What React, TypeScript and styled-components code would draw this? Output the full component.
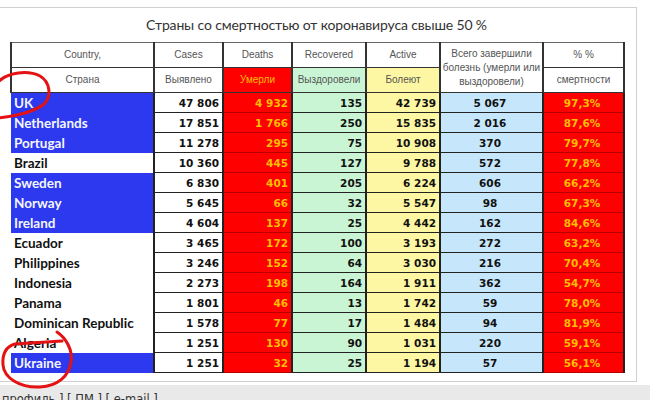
import React from 'react';
import styled, { createGlobalStyle } from 'styled-components';

const GlobalStyle = createGlobalStyle`
	html, body {
		margin: 0;
		padding: 0;
		background: #fff;
		overflow: hidden;
	}
	#root {
		width: 650px;
		height: 400px;
	}
`;

const Page = styled.div`
	position: relative;
	width: 650px;
	height: 400px;
	display: flex;
	flex-direction: column;
	overflow: hidden;
`;

const Frame = styled.div`
	box-sizing: border-box;
	flex: none;
	width: 647px;
	height: 375px;
	margin: 7px 0 0 -10px;
	padding-left: 19px;
	border: 1px solid #cfcfcf;
	background: #fff;
`;

const Title = styled.div`
	width: 613px;
	height: 34px;
	line-height: 34px;
	text-align: center;
	font-family: Lato, 'Liberation Sans', sans-serif;
	font-size: 14px;
	letter-spacing: -0.15px;
	color: #333;
`;

const Table = styled.table`
	border-collapse: collapse;
	table-layout: fixed;
	width: 613px;
`;

const Col = styled.col<{ $w: number }>`
	width: ${p => p.$w}px;
`;

const Head = styled.th<{ $bg?: string; $fg?: string }>`
	height: 24px;
	padding: 0 2px;
	border: 1px solid #333;
	border-left-width: 2px;
	border-right-width: 2px;
	background: ${p => p.$bg || '#fff'};
	color: ${p => p.$fg || '#555'};
	font-family: 'Liberation Sans', Arial, sans-serif;
	font-size: 10px;
	font-weight: normal;
	line-height: 12px;
	text-align: center;
	vertical-align: middle;
`;

const TopHead = styled(Head)`
	border-top-color: #666;
`;

const TallHead = styled(TopHead)`
	padding: 0;
	line-height: 14px;
`;

const Country = styled.td<{ $blue?: boolean }>`
	height: 19px;
	padding: 0 0 0 3px;
	border-right: 2px solid #222;
	background: ${p => (p.$blue ? '#2d39ee' : '#fff')};
	color: ${p => (p.$blue ? '#f4f6ff' : '#111')};
	font-family: Lato, 'Liberation Sans', sans-serif;
	font-size: 13.5px;
	font-weight: 700;
	white-space: nowrap;
`;

const Num = styled.td<{ $bg: string; $fg?: string; $line?: string; $center?: boolean }>`
	height: 19px;
	padding: 0 3px 0 0;
	border-left: 2px solid #222;
	border-right: 2px solid #222;
	border-bottom: 1px solid ${p => p.$line || '#222'};
	background: ${p => p.$bg};
	color: ${p => p.$fg || '#111'};
	font-family: 'DejaVu Sans', Verdana, sans-serif;
	font-size: 10.5px;
	font-weight: 700;
	text-align: ${p => (p.$center ? 'center' : 'right')};
	white-space: nowrap;
`;

const Footer = styled.div`
	flex: 1;
	margin-top: 3px;
	padding: 7px 0 0 2px;
	background: #e9e9e9;
	font-family: 'DejaVu Sans', Verdana, sans-serif;
	font-size: 11.5px;
	line-height: 14px;
	color: #333;
	white-space: nowrap;
`;

const Marks = styled.svg`
	position: absolute;
	left: 0;
	top: 0;
	pointer-events: none;
`;

const RED = '#ff0000';
const GOLD = '#ffbf00';
const GREEN = '#c9f5d4';
const YELLOW = '#fdf7a3';
const SKY = '#c6e7fb';

type Row = [string, boolean, string, string, string, string, string, string];

const rows: Row[] = [
	['UK', true, '47 806', '4 932', '135', '42 739', '5 067', '97,3%'],
	['Netherlands', true, '17 851', '1 766', '250', '15 835', '2 016', '87,6%'],
	['Portugal', true, '11 278', '295', '75', '10 908', '370', '79,7%'],
	['Brazil', false, '10 360', '445', '127', '9 788', '572', '77,8%'],
	['Sweden', true, '6 830', '401', '205', '6 224', '606', '66,2%'],
	['Norway', true, '5 645', '66', '32', '5 547', '98', '67,3%'],
	['Ireland', true, '4 604', '137', '25', '4 442', '162', '84,6%'],
	['Ecuador', false, '3 465', '172', '100', '3 193', '272', '63,2%'],
	['Philippines', false, '3 246', '152', '64', '3 030', '216', '70,4%'],
	['Indonesia', false, '2 273', '198', '164', '1 911', '362', '54,7%'],
	['Panama', false, '1 801', '46', '13', '1 742', '59', '78,0%'],
	['Dominican Republic', false, '1 578', '77', '17', '1 484', '94', '81,9%'],
	['Algeria', false, '1 251', '130', '90', '1 031', '220', '59,1%'],
	['Ukraine', true, '1 251', '32', '25', '1 194', '57', '56,1%'],
];

export default function App() {
	return (
		<Page>
			<GlobalStyle />
			<Frame>
				<Title>Страны со смертностью от коронавируса свыше 50 %</Title>
				<Table>
					<colgroup>
						<Col $w={143} />
						<Col $w={69} />
						<Col $w={69} />
						<Col $w={74} />
						<Col $w={74} />
						<Col $w={103} />
						<Col $w={81} />
					</colgroup>
					<thead>
						<tr>
							<TopHead>Country,</TopHead>
							<TopHead>Cases</TopHead>
							<TopHead>Deaths</TopHead>
							<TopHead>Recovered</TopHead>
							<TopHead>Active</TopHead>
							<TallHead rowSpan={2}>
								Всего завершили<br />болезнь (умерли или<br />выздоровели)
							</TallHead>
							<TopHead>% %</TopHead>
						</tr>
						<tr>
							<Head>Страна</Head>
							<Head>Выявлено</Head>
							<Head $bg={RED} $fg={GOLD}>Умерли</Head>
							<Head $bg={GREEN}>Выздоровели</Head>
							<Head $bg={YELLOW}>Болеют</Head>
							<Head>смертности</Head>
						</tr>
					</thead>
					<tbody>
						{rows.map(([name, blue, cases, deaths, rec, active, total, pct]) => (
							<tr key={name}>
								<Country $blue={blue}>{name}</Country>
								<Num $bg="#fff">{cases}</Num>
								<Num $bg={RED} $fg={GOLD} $line="#b80000">{deaths}</Num>
								<Num $bg={GREEN}>{rec}</Num>
								<Num $bg={YELLOW}>{active}</Num>
								<Num $bg={SKY} $center>{total}</Num>
								<Num $bg={RED} $fg={GOLD} $line="#b80000" $center>{pct}</Num>
							</tr>
						))}
					</tbody>
				</Table>
			</Frame>
			<Footer>профиль ] [ ПМ ] [ e-mail ]</Footer>
			<Marks width="650" height="400" viewBox="0 0 650 400">
				<path d="M-2,82 C8,72 28,70 40,76 C50,82 52,96 44,104 C34,112 16,116 -2,118"
					fill="none" stroke="#e41212" strokeWidth="3" strokeLinecap="round" />
				<path d="M57,332 C66,338 73,350 71,362 C69,376 58,386 40,387 C20,388 4,378 3,365 C2,352 8,346 15,344 L62,341"
					fill="none" stroke="#e41212" strokeWidth="3" strokeLinecap="round" />
			</Marks>
		</Page>
	);
}
